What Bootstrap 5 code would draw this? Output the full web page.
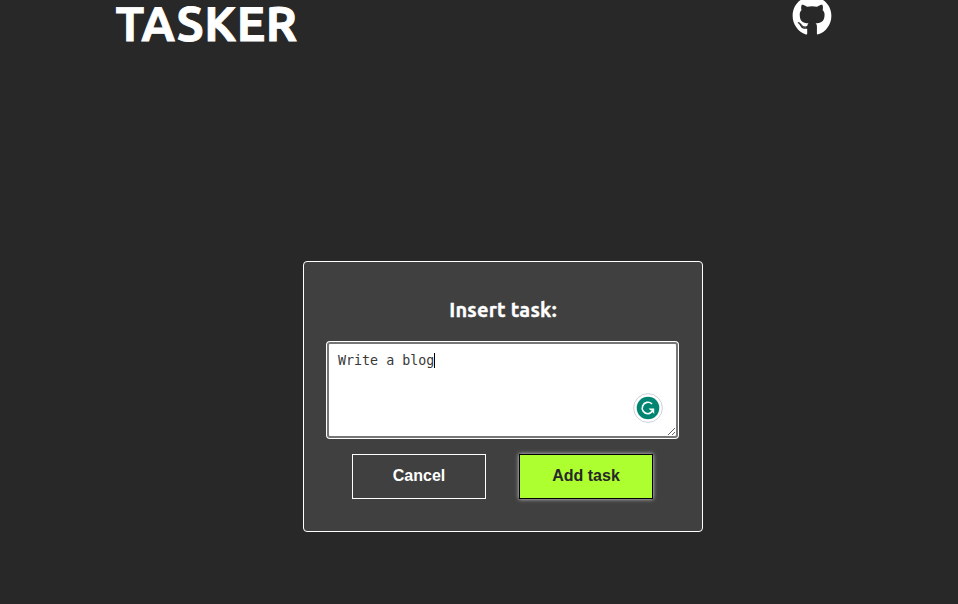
<!DOCTYPE html>
<html lang="en">
<head>
<meta charset="utf-8">
<meta name="viewport" content="width=device-width, initial-scale=1">
<title>Tasker</title>
<link href="https://cdn.jsdelivr.net/npm/bootstrap@5.3.0/dist/css/bootstrap.min.css" rel="stylesheet">
<style>
body{background:#282828;color:#fff;font-family:Ubuntu,"Noto Sans",sans-serif;height:604px}
.topbar{height:48px;padding:0 126px 0 115.5px}
.brand{font-size:48px;font-weight:700;line-height:46px;letter-spacing:.55px;-webkit-text-stroke:.9px #fff}
.gh{width:40px;height:40px;margin-top:-4px;fill:#fff}
.task-box{width:400px;height:271px;margin:213px 0 0 303px;padding:35px 22px 0;background:#404040;border:1px solid #fff;border-radius:4px}
.task-title{font-size:20px;font-weight:700;line-height:26px;letter-spacing:.2px;-webkit-text-stroke:.35px #fff;margin-bottom:18px}
.input-wrap{width:353px;padding:1px}
.task-input{display:block;width:351px;height:96px;padding:9px;font:13.333px/16px "DejaVu Sans Mono",monospace;color:#383838;background:#fff;border:2px solid #767676;outline:0;box-shadow:0 0 0 1px #fff;border-radius:3px;resize:both}
.caret{left:108px;top:12px;width:1px;height:15px;background:#000}
.helper{right:16px;bottom:16px;width:30px;height:30px}
.task-btn{width:134px;height:45px;padding:0 0 1px 1px;border-radius:0;font:700 16px/20px "Liberation Sans",Arial,sans-serif}
.btn-plain,.btn-plain:hover{color:#fff;background:#404040;border:1px solid #fff}
.btn-add,.btn-add:hover{color:#282828;background:#adff2f;border:1px solid #000;box-shadow:0 0 4px #ddd}
.actions{gap:33px;margin:15px 2px 0 0}
</style>
<script src="https://cdn.jsdelivr.net/npm/bootstrap@5.3.0/dist/js/bootstrap.bundle.min.js"></script>
</head>
<body>
<header class="topbar d-flex justify-content-between align-items-start">
<h1 class="brand m-0">TASKER</h1>
<a href="#" aria-label="GitHub" class="d-block"><svg class="gh d-block" viewBox="0 0 496 512"><path d="M244.8 8C106.1 8 0 113.3 0 252c0 110.9 69.8 205.8 169.5 239.2 12.8 2.3 17.3-5.6 17.3-12.1 0-6.2-.3-40.4-.3-61.4 0 0-70 15-84.7-29.8 0 0-11.4-29.1-27.8-36.6 0 0-22.9-15.7 1.6-15.4 0 0 24.9 2 38.6 25.8 21.9 38.6 58.6 27.5 72.9 20.9 2.3-16 8.8-27.1 16-33.7-55.9-6.2-112.3-14.3-112.3-110.5 0-27.5 7.6-41.3 23.6-58.9-2.6-6.5-11.1-33.3 2.6-67.9 20.9-6.5 69 27 69 27 20-5.6 41.5-8.5 62.8-8.5s42.8 2.9 62.8 8.5c0 0 48.1-33.6 69-27 13.7 34.7 5.2 61.4 2.6 67.9 16 17.7 25.8 31.5 25.8 58.9 0 96.5-58.9 104.2-114.8 110.5 9.2 7.9 17 22.9 17 46.4 0 33.7-.3 75.4-.3 83.6 0 6.5 4.6 14.4 17.3 12.1C428.2 457.8 496 362.9 496 252 496 113.3 383.5 8 244.8 8z"/><path d="M97.2 352.9c-1.3 1-1 3.3.7 5.2 1.6 1.6 3.9 2.3 5.2 1 1.3-1 1-3.3-.7-5.2-1.6-1.6-3.9-2.3-5.2-1zm-10.8-8.1c-.7 1.3.3 2.9 2.3 3.9 1.6 1 3.6.7 4.3-.7.7-1.3-.3-2.9-2.3-3.9-2-.6-3.6-.3-4.3.7zm32.4 35.6c-1.6 1.3-1 4.3 1.3 6.2 2.3 2.3 5.2 2.6 6.5 1 1.3-1.3.7-4.3-1.3-6.2-2.2-2.3-5.2-2.6-6.5-1zm-11.4-14.7c-1.6 1-1.6 3.6 0 5.9s4.3 3.3 5.6 2.3c1.6-1.3 1.6-3.9 0-6.2-1.4-2.3-4-3.3-5.6-2z"/><ellipse cx="139" cy="396" rx="6" ry="4"/><ellipse cx="160" cy="398" rx="6" ry="4"/></svg></a>
</header>
<main class="task-box">
<h2 class="task-title text-center">Insert task:</h2>
<div class="input-wrap position-relative">
<textarea class="task-input" aria-label="Task" spellcheck="false">Write a blog</textarea>
<span class="caret position-absolute"></span>
<svg class="helper position-absolute" viewBox="0 0 30 30"><circle cx="15" cy="15" r="14.4" fill="#fff" stroke="#d0d0dc"/><circle cx="15" cy="15" r="11.3" fill="#008573"/><path d="M19 11A5.7 5.7 0 1 0 15 20.7Q18.3 20.5 19.8 17.2" fill="none" stroke="#fff" stroke-width="1.6"/><path d="M15.6 15.5H21.2V21.1L19.5 19.1V17.3H17.4z" fill="#fff"/></svg>
</div>
<div class="actions d-flex justify-content-center">
<button type="button" class="btn task-btn btn-plain">Cancel</button>
<button type="button" class="btn task-btn btn-add">Add task</button>
</div>
</main>
</body>
</html>
